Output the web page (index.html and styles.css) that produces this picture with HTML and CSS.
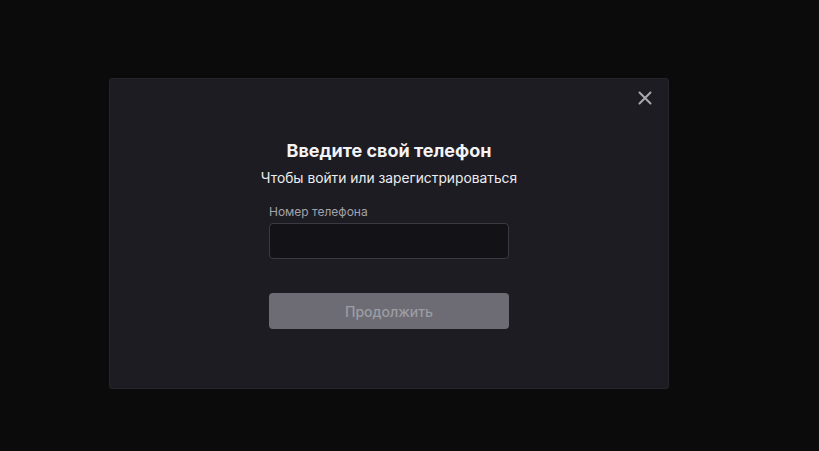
FILE: index.html
```html
<!DOCTYPE html>
<html lang="ru">

<head>
    <meta charset="UTF-8">
    <meta name="viewport" content="width=device-width, initial-scale=1.0">
    <title>Вход</title>
    <link rel="stylesheet" href="styles.css">
</head>

<body>

    <div class="overlay">
        <div class="modal">
            <button class="close-btn" aria-label="Закрыть">
                <svg width="14" height="14" viewBox="0 0 14 14">
                    <path d="M1.5 1.5 L12.5 12.5 M12.5 1.5 L1.5 12.5" stroke="#a9a8b0" stroke-width="2" stroke-linecap="round" />
                </svg>
            </button>

            <h2 class="modal-title">Введите свой телефон</h2>
            <p class="modal-subtitle">Чтобы войти или зарегистрироваться</p>

            <form class="phone-form">
                <label class="field-label" for="phone">Номер телефона</label>
                <input class="field-input" id="phone" type="tel">
                <button class="submit-btn" type="button" disabled>Продолжить</button>
            </form>
        </div>
    </div>

</body>

</html>
```

FILE: styles.css
```css
body {
    font-family: Inter, "Noto Sans", sans-serif;
    background-color: #0b0b0b;
    margin: 0;
    color: #f2f2f4;
}

.overlay {
    height: 451px;
    padding: 78px 0 0 109px;
    box-sizing: border-box;
}

.modal {
    position: relative;
    width: 560px;
    height: 311px;
    box-sizing: border-box;
    background-color: #1d1c22;
    border: 1px solid #26252b;
    border-radius: 3px;
    display: flex;
    flex-direction: column;
    align-items: center;
    padding-top: 60px;
}

.close-btn {
    position: absolute;
    top: 12px;
    right: 16px;
    background: none;
    border: none;
    padding: 0;
    width: 14px;
    height: 14px;
    cursor: pointer;
}

.close-btn svg {
    display: block;
}

.modal-title {
    margin: 0;
    font-size: 18px;
    font-weight: 700;
    line-height: 24px;
    color: #f3f3f5;
}

.modal-subtitle {
    margin: 6px 0 0;
    font-size: 13.8px;
    line-height: 18px;
    color: #ececef;
}

.phone-form {
    width: 240px;
    margin-top: 17px;
    display: flex;
    flex-direction: column;
}

.field-label {
    font-size: 12px;
    line-height: 16px;
    color: #a3a2aa;
}

.field-input {
    margin-top: 3px;
    height: 36px;
    box-sizing: border-box;
    background-color: #121217;
    border: 1px solid #3b3a42;
    border-radius: 4px;
    color: #fff;
    font-family: inherit;
    font-size: 14px;
    padding: 0 10px;
    outline: none;
}

.submit-btn {
    margin-top: 34px;
    height: 36px;
    background-color: #6d6c74;
    border: none;
    border-radius: 4px;
    color: #9d9ca3;
    font-family: inherit;
    font-size: 14px;
    font-weight: 500;
}
```
